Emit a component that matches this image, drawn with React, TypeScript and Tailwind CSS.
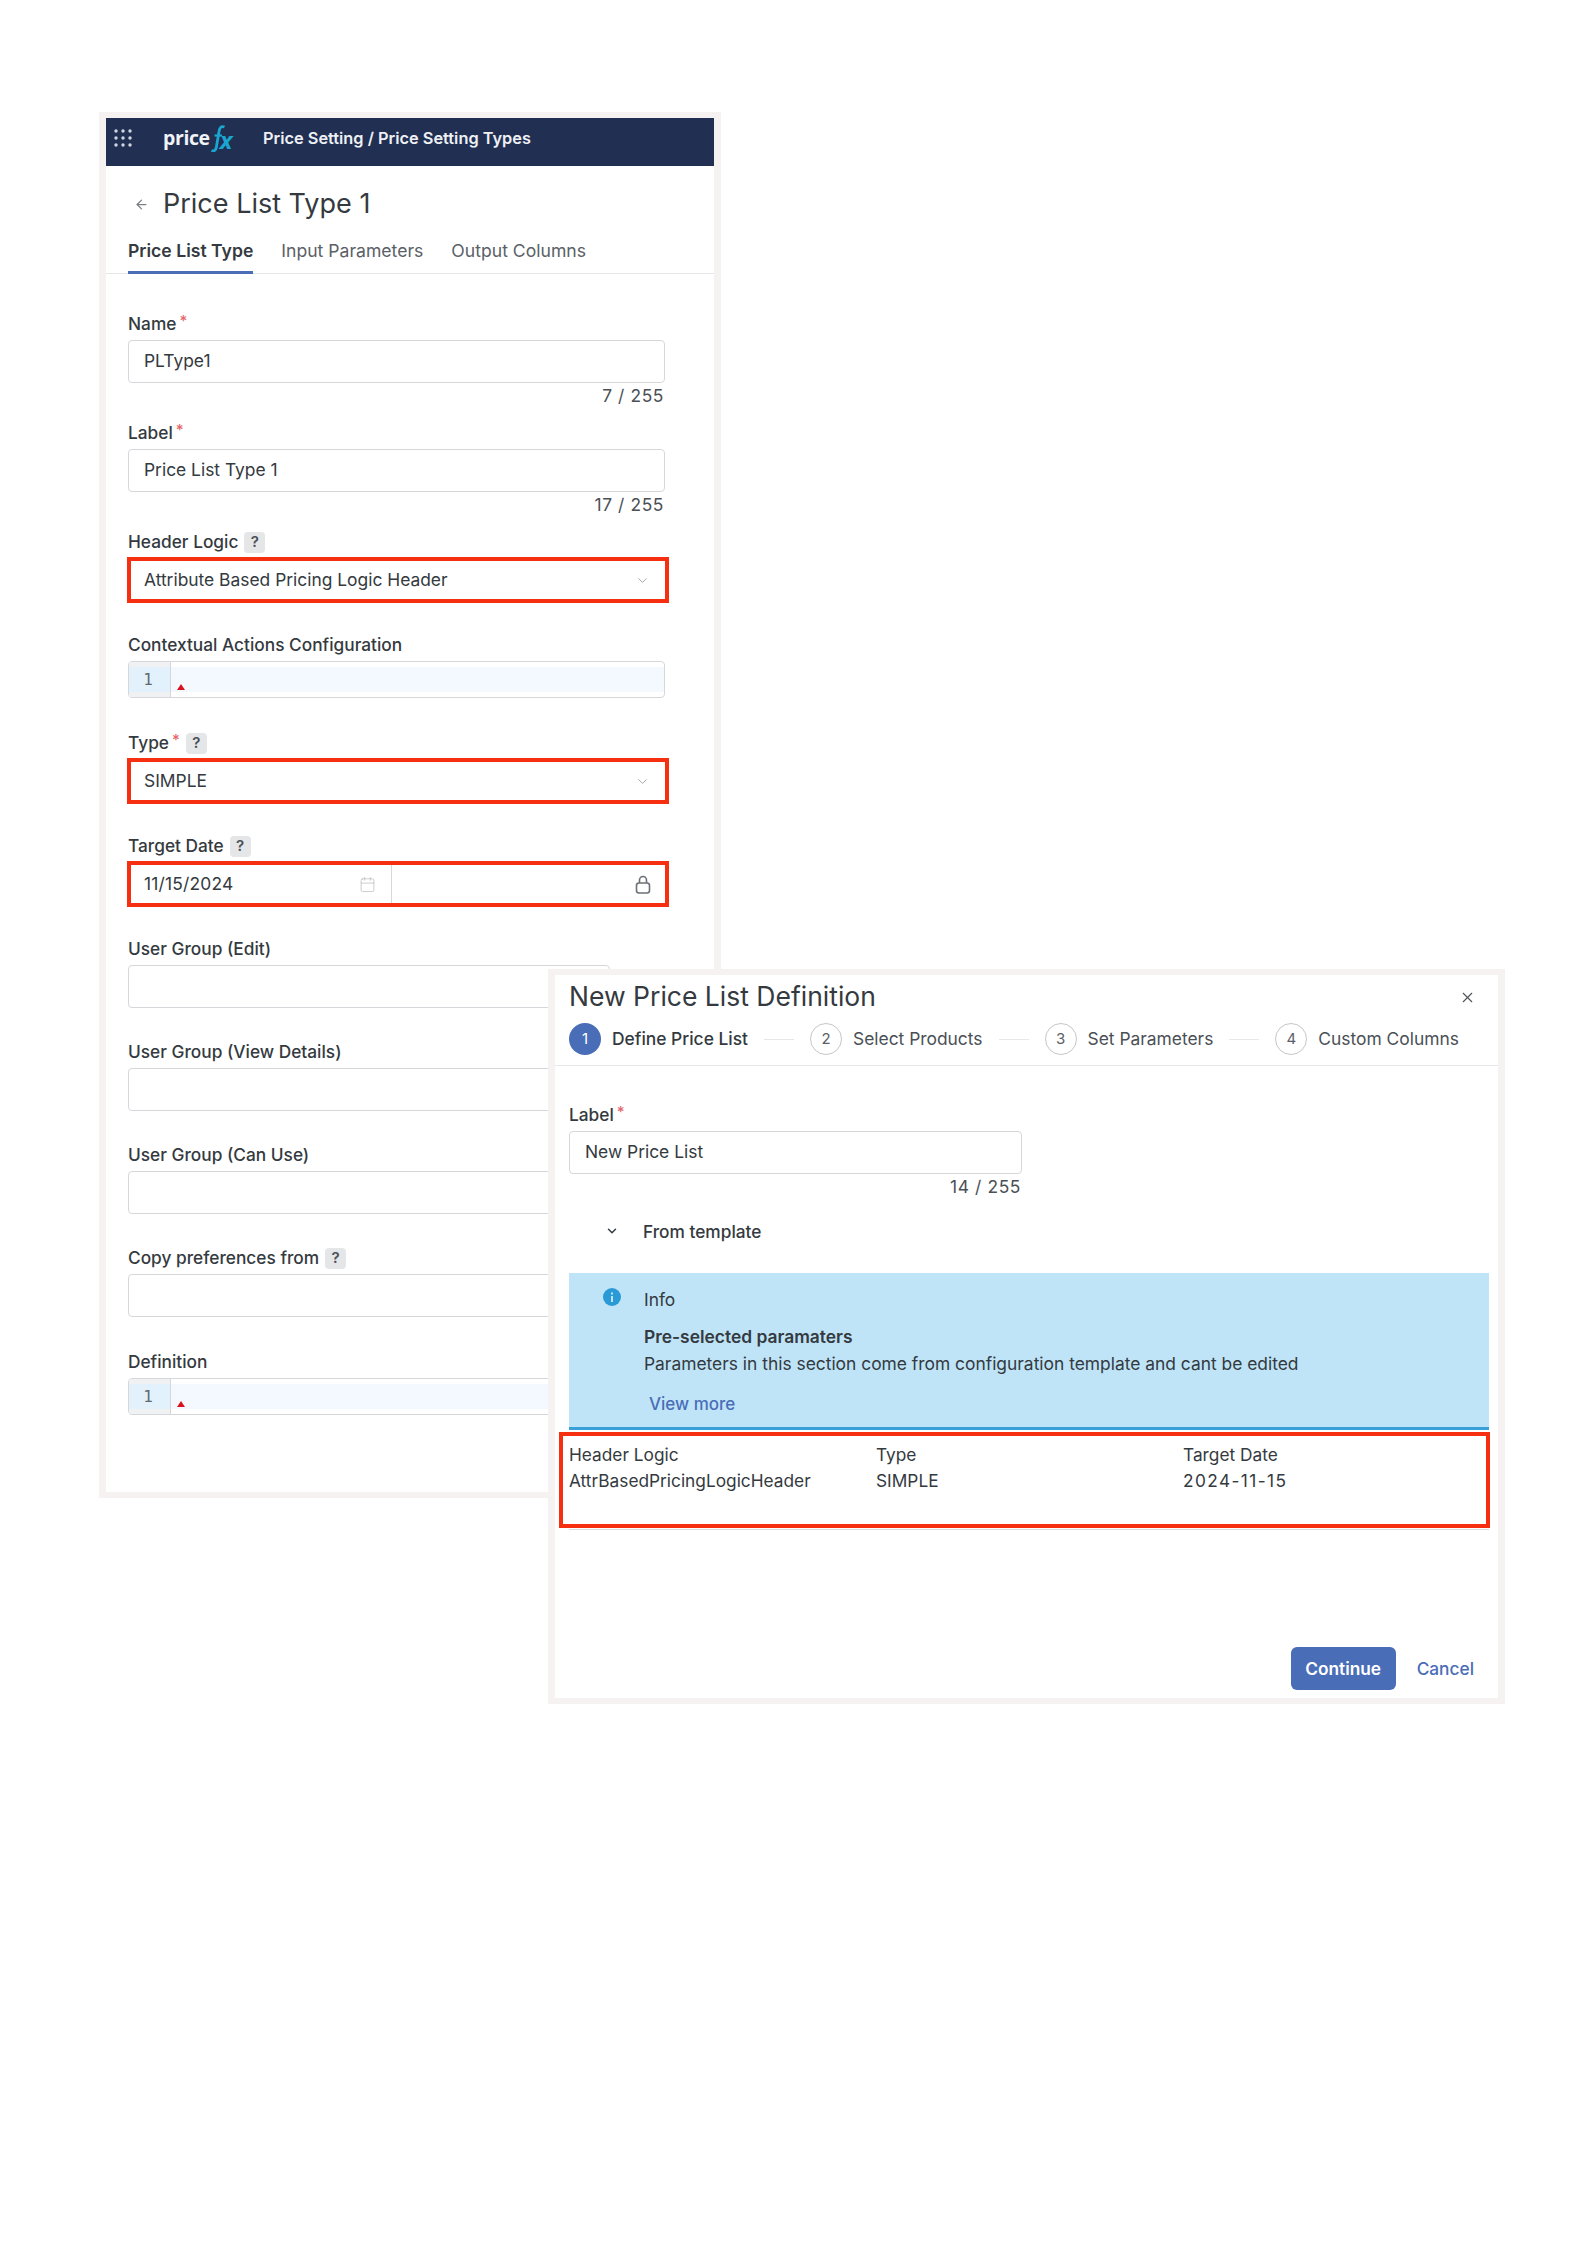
import React from 'react';
import { ArrowLeft, Calendar, ChevronDown, X } from 'lucide-react';

const font = { fontFamily: 'Inter, "Liberation Sans", sans-serif' };

const Star = () => <span className="text-[#e5676b] text-[15px] leading-none relative -top-1 ml-[3px]">*</span>;

const Help = () => (
  <span className="ml-[6px] flex h-[21px] w-[21px] items-center justify-center rounded bg-[#e4e6e8] text-[15px] font-semibold text-[#4a5056]">?</span>
);

const Label = ({ text, star, help }: { text: string; star?: boolean; help?: boolean }) => (
  <div className="flex h-[22px] items-center text-[17.3px] font-medium text-[#343a40]">
    {text}
    {star && <Star />}
    {help && <Help />}
  </div>
);

const Input = ({ value, className }: { value?: string; className?: string }) => (
  <div className={`flex h-[43px] items-center rounded-[4px] border border-[#d5d7da] bg-white pl-[15px] text-[17.4px] text-[#343a40] ${className ?? ''}`}>
    {value}
  </div>
);

const Count = ({ text }: { text: string }) => (
  <div className="mt-[3px] h-[20px] pr-[1px] text-right text-[17.4px] leading-[20px] tracking-[0.6px] text-[#4a5056]">{text}</div>
);

const Highlighted = ({ children }: { children: React.ReactNode }) => (
  <div className="-ml-px mt-[4px] h-[46px] w-[542px] border-4 border-[#f52f0f]">{children}</div>
);

const SelectBox = ({ value }: { value: string }) => (
  <Highlighted>
    <div className="flex h-full items-center justify-between pl-[13px] pr-[15px] text-[17.4px] text-[#343a40]">
      {value}
      <ChevronDown size={15} strokeWidth={1.5} className="text-[#9ba1a6]" />
    </div>
  </Highlighted>
);

const Editor = ({ className }: { className?: string }) => (
  <div className={`mt-[5px] flex h-[37px] overflow-hidden rounded-[4px] border border-[#d5d7da] bg-white ${className ?? ''}`}>
    <div className="flex w-[42px] items-center border-r border-[#d5d7da] bg-[#f0f1f2]">
      <div className="flex h-[25px] w-full items-center justify-center bg-[#e3f1fc] pr-[3px] font-['DejaVu_Sans_Mono'] text-[16px] text-[#5f6a73]">1</div>
    </div>
    <div className="flex flex-1 items-center">
      <div className="relative h-[25px] w-full bg-[#f3f9fe]">
        <span className="absolute left-[6px] top-[17px] h-0 w-0 border-x-[4px] border-b-[6px] border-x-transparent border-b-[#d8121f]" />
      </div>
    </div>
  </div>
);

const LockIcon = () => (
  <svg width="16" height="19" viewBox="0 0 16 19" fill="none" stroke="#6b7177" strokeWidth="1.6">
    <rect x="1.5" y="8" width="13" height="10" rx="2.5" />
    <path d="M4.5 8V5a3.5 3.5 0 0 1 7 0v3" />
  </svg>
);

const Logo = () => (
  <div className="ml-[31px] flex w-[100px] items-center">
    <span className="text-[19.5px] font-bold leading-none tracking-[-0.4px] text-[#f1f3f6]" style={{ fontFamily: '"Open Sans", sans-serif' }}>price</span>
    <svg width="14" height="27" viewBox="0 0 14 27" className="ml-[1px] shrink-0">
      <path d="M13.5 2C10 0.5 8.5 3 8 6.5L5.5 21.5C5 25.5 3 26.5 0.5 25.5" fill="none" stroke="#1ba6cf" strokeWidth="2.8" />
      <path d="M3.5 10.5H11" fill="none" stroke="#1ba6cf" strokeWidth="2.2" />
    </svg>
    <span className="-ml-[5px] mt-[4px] text-[24px] font-bold italic leading-none text-[#1ba6cf]" style={{ fontFamily: '"Open Sans", sans-serif' }}>x</span>
  </div>
);

const GridDots = () => (
  <svg width="18" height="18" viewBox="0 0 18 18" className="ml-[8px] shrink-0" fill="#cfd6e2">
    {[2, 9, 16].flatMap((y) => [2, 9, 16].map((x) => <circle key={`${x}-${y}`} cx={x} cy={y} r="1.7" />))}
  </svg>
);

const StepItem = ({ n, text, active, last }: { n: number; text: string; active?: boolean; last?: boolean }) => (
  <div className="flex items-center">
    <div className={`flex h-[32px] w-[32px] items-center justify-center rounded-full text-[15px] ${active ? 'bg-[#4a6db8] text-white' : 'border border-[#c4c7ca] text-[#5a6066]'}`}>{n}</div>
    <span className={`ml-[11px] whitespace-nowrap text-[17.4px] ${active ? 'font-medium text-[#343a40]' : 'text-[#4a5056]'}`}>{text}</span>
    {!last && <span className="mx-[16px] h-px w-[30px] bg-[#e6e7e9]" />}
  </div>
);

const Values = ({ items }: { items: string[] }) => (
  <div className="grid h-[26px] grid-cols-[307px_307px_1fr] items-center pl-[6px] text-[17.3px] text-[#343a40]">
    {items.map((t) => <span key={t} className={t === '2024-11-15' ? 'tracking-[1.4px]' : ''}>{t}</span>)}
  </div>
);

const ListTypePanel = () => (
  <div className="ml-[99px] h-[1386px] w-[622px] border-x-[7px] border-y-[6px] border-[#f6f2f2] bg-white">
    <header className="flex h-[48px] items-center bg-[#202f52] pb-[8px]">
      <GridDots />
      <Logo />
      <span className="text-[16.35px] font-semibold text-[#eef0f4]">Price Setting / Price Setting Types</span>
    </header>
    <div className="flex h-[75px] items-center pl-[28px] pt-[2px]">
      <ArrowLeft size={15} strokeWidth={2} className="text-[#7a8087]" />
      <h1 className="ml-[14px] text-[27px] font-normal text-[#343a40]">Price List Type 1</h1>
    </div>
    <nav className="flex h-[33px] border-b border-[#e6e7e9] pl-[22px] text-[17.6px] leading-[20px]">
      <div className="h-[33px] border-b-[3px] border-[#4a6db8] font-semibold text-[#343a40]">Price List Type</div>
      <div className="ml-[28px] text-[#5a6066]">Input Parameters</div>
      <div className="ml-[28px] text-[#5a6066]">Output Columns</div>
    </nav>

    <div className="w-[559px] pl-[22px] pt-[39px]">
      <Label text="Name" star />
      <div className="mt-[5px]"><Input value="PLType1" /></div>
      <Count text="7 / 255" />

      <div className="mt-[16px]"><Label text="Label" star /></div>
      <div className="mt-[5px]"><Input value="Price List Type 1" /></div>
      <Count text="17 / 255" />

      <div className="mt-[16px]"><Label text="Header Logic" help /></div>
      <SelectBox value="Attribute Based Pricing Logic Header" />

      <div className="mt-[31px]"><Label text="Contextual Actions Configuration" /></div>
      <Editor />

      <div className="mt-[34px]"><Label text="Type" star help /></div>
      <SelectBox value="SIMPLE" />

      <div className="mt-[31px]"><Label text="Target Date" help /></div>
      <Highlighted>
        <div className="flex h-full items-center text-[17.4px] tracking-[0.2px] text-[#343a40]">
          <div className="flex h-full w-[261px] items-center justify-between border-r border-[#d5d7da] pl-[13px] pr-[15px]">
            11/15/2024
            <Calendar size={17} strokeWidth={1} className="text-[#b4b8bc]" />
          </div>
          <div className="flex flex-1 justify-end pr-[14px]">
            <LockIcon />
          </div>
        </div>
      </Highlighted>

      <div className="mt-[31px]"><Label text="User Group (Edit)" /></div>
      <div className="mt-[5px]"><Input className="w-[482px]" /></div>

      <div className="mt-[33px]"><Label text="User Group (View Details)" /></div>
      <div className="mt-[5px]"><Input className="w-[482px]" /></div>

      <div className="mt-[33px]"><Label text="User Group (Can Use)" /></div>
      <div className="mt-[5px]"><Input className="w-[482px]" /></div>

      <div className="mt-[33px]"><Label text="Copy preferences from" help /></div>
      <div className="mt-[5px]"><Input className="w-[482px]" /></div>

      <div className="mt-[34px]"><Label text="Definition" /></div>
      <Editor className="w-[482px]" />
    </div>
  </div>
);

const DefinitionModal = () => (
  <div className="absolute left-[548px] top-[969px] h-[735px] w-[957px] border-x-[7px] border-y-[6px] border-[#f6f2f2] bg-white">
    <div className="flex h-[44px] items-center justify-between pl-[14px] pr-[22px]">
      <h2 className="text-[26.5px] font-normal text-[#343a40]">New Price List Definition</h2>
      <X size={17} strokeWidth={1.5} className="text-[#4a5056]" />
    </div>
    <div className="flex h-[47px] items-start border-b border-[#e6e7e9] pl-[14px] pt-[4px]">
      <StepItem n={1} text="Define Price List" active />
      <StepItem n={2} text="Select Products" />
      <StepItem n={3} text="Set Parameters" />
      <StepItem n={4} text="Custom Columns" last />
    </div>

    <div className="ml-[14px] mt-[38px] w-[453px]">
      <Label text="Label" star />
      <div className="mt-[5px]"><Input value="New Price List" /></div>
      <Count text="14 / 255" />
    </div>

    <div className="mt-[23px] flex h-[24px] items-center pl-[50px] text-[17.3px] font-medium text-[#343a40]">
      <ChevronDown size={14} strokeWidth={2.5} className="-mt-[3px]" />
      <span className="ml-[24px]">From template</span>
    </div>

    <div className="ml-[14px] mt-[29px] h-[157px] w-[920px] border-b-[3px] border-[#3ba0d8] bg-[#bfe4f8] pl-[34px]">
      <div className="flex pt-[15px]">
        <svg width="18" height="18" viewBox="0 0 18 18" className="shrink-0">
          <circle cx="9" cy="9" r="9" fill="#2a9ad6" />
          <rect x="8" y="8" width="2" height="6" fill="#bfe4f8" />
          <rect x="8" y="4.5" width="2" height="2" fill="#bfe4f8" />
        </svg>
        <div className="ml-[23px] text-[17.4px] text-[#343a40]">
          <div className="leading-[24px]">Info</div>
          <div className="mt-[13px] font-semibold leading-[24px]">Pre-selected paramaters</div>
          <div className="mt-[3px] leading-[24px]">Parameters in this section come from configuration template and cant be edited</div>
          <div className="ml-[5px] mt-[16px] text-[17px] font-medium leading-[24px] text-[#4a6db8]">View more</div>
        </div>
      </div>
    </div>

    <div className="ml-[4px] mt-[2px] h-[96px] w-[931px] border-4 border-[#f52f0f] pt-[6px]">
      <Values items={['Header Logic', 'Type', 'Target Date']} />
      <Values items={['AttrBasedPricingLogicHeader', 'SIMPLE', '2024-11-15']} />
    </div>
    <div className="ml-[14px] mt-[1px] h-px w-[920px] bg-[#dcdde0]" />

    <div className="mt-[117px] flex items-center justify-end pr-[24px]">
      <button className="h-[43px] w-[105px] rounded-[6px] bg-[#4a6db8] text-[17.3px] font-semibold text-white">Continue</button>
      <button className="ml-[21px] text-[17.3px] font-medium text-[#4a6db8]">Cancel</button>
    </div>
  </div>
);

export default function App() {
  return (
    <div className="relative min-h-[2245px] bg-white pt-[112px]" style={font}>
      <ListTypePanel />
      <DefinitionModal />
    </div>
  );
}
